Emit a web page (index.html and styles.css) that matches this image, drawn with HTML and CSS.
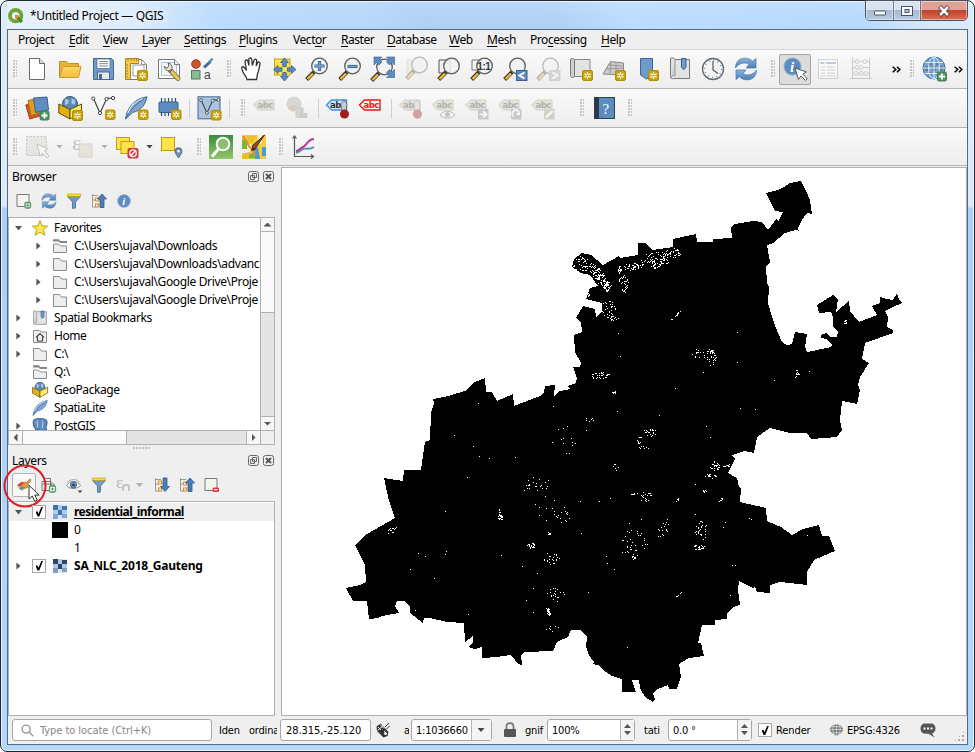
FILE: index.html
```
<!DOCTYPE html>
<html lang="en">
<head>
<meta charset="utf-8">
<title>*Untitled Project — QGIS</title>
<link rel="stylesheet" href="styles.css">
</head>
<body>
<svg class="gradients" width="0" height="0" aria-hidden="true">
<defs>
<linearGradient id="gBlue" x1="0" y1="0" x2="0" y2="1"><stop offset="0" stop-color="#8fb4da"/><stop offset="1" stop-color="#4c7eb5"/></linearGradient>
<linearGradient id="gYel" x1="0" y1="0" x2="0" y2="1"><stop offset="0" stop-color="#fbd766"/><stop offset="1" stop-color="#f2bd3c"/></linearGradient>
<linearGradient id="gGrn" x1="0" y1="0" x2="0" y2="1"><stop offset="0" stop-color="#3c8b3c"/><stop offset="1" stop-color="#92c76a"/></linearGradient>
</defs>
</svg>
<svg class="defs" aria-hidden="true">
<symbol id="gold" viewBox="0 0 11 11"><rect x=".5" y=".5" width="10" height="10" rx="1.5" fill="#c8a20a" stroke="#b38f00"/><path d="M5.5 2v7M2.4 3.7l6.2 3.6M8.6 3.7L2.4 7.3" stroke="#fff" stroke-width="1.3"/><circle cx="5.5" cy="5.5" r="1" fill="#c8a20a"/></symbol>
<symbol id="plus" viewBox="0 0 10 10"><rect x=".5" y=".5" width="9" height="9" rx="1.5" fill="#4f9461" stroke="#3f7d50"/><path d="M5 2v6M2 5h6" stroke="#fff" stroke-width="1.8"/></symbol>
<symbol id="mag" viewBox="0 0 24 24"><path d="M9 15l-7.300 7.500" stroke="#333" stroke-width="4"/><path d="M8 16.500l-5.500 5.500" stroke="#f4bd2e" stroke-width="2.400"/><circle cx="14.500" cy="9" r="7.800" fill="#eef1f3" fill-opacity=".85" stroke="#5b5b5b" stroke-width="1.300"/></symbol>
<symbol id="new" viewBox="0 0 24 24"><path d="M4.500 1.500h10l5 5v16h-15z" fill="#fff" stroke="#6a6a6a"/><path d="M14.500 1.500v5h5" fill="#ddd" stroke="#6a6a6a"/></symbol>
<symbol id="open" viewBox="0 0 24 24"><path d="M1.500 20V4.500h7l2 2h10V10" fill="#e9b13a" stroke="#bf8f22"/><path d="M1.500 20.500L5 9.500h18l-2.500 11z" fill="url(#gYel)" stroke="#cf9b28"/></symbol>
<symbol id="save" viewBox="0 0 24 24"><path d="M2.500 1.500h18l2 2v19h-20z" fill="#6e9bcb" stroke="#44698f"/><rect x="6" y="2" width="13" height="9.500" fill="#fff" stroke="#44698f" stroke-width=".7"/><path d="M8 4.500h9M8 6.700h9M8 9h9" stroke="#888"/><rect x="6.500" y="15" width="12" height="7.500" fill="#e8e8e8" stroke="#44698f"/><rect x="8" y="17" width="3" height="5" fill="#44698f"/></symbol>
<symbol id="layout" viewBox="0 0 24 24"><path d="M5.500 2.500h12l5 5v15h-17z" fill="#fff" stroke="#777"/><path d="M17.500 2.500v5h5M9 8h11v11H9z" fill="none" stroke="#999"/><path d="M1.500 1.500h13v5h-8v16h-5z" fill="#f3cb49" stroke="#a8811a"/><path d="M4 2v2M7 2v2M10 2v2M12.500 2v2M2 8h2M2 11h2M2 14h2M2 17h2M2 20h2" stroke="#a8811a"/><use href="#gold" x="13" y="13" width="11" height="11"/></symbol>
<symbol id="wrench" viewBox="0 0 24 24"><path d="M1.500 2.500h16l5 5v14h-21z" fill="#fff" stroke="#777"/><path d="M4.500 5.500h15v13h-15z" fill="#f4f8fc" stroke="#aac2dc"/><path d="M17.500 2.500v5h5" fill="#eee" stroke="#777"/><path d="M12 12l9 9.500" stroke="#8a7a45" stroke-width="5" stroke-linecap="round"/><path d="M15.500 15.500l5.500 6" stroke="#e7c85a" stroke-width="3.200" stroke-linecap="round"/><path d="M7 9.500c1.500 4 3.500 4.500 6 4l2-2c.5-3-1-5-4-5.500l1 3-2 2z" fill="#e3e3e3" stroke="#666"/></symbol>
<symbol id="style" viewBox="0 0 24 24"><circle cx="6" cy="7" r="4.300" fill="#d2562d" stroke="#9d3c1c"/><path d="M14 10.500l6.500-6" stroke="#44698f" stroke-width="3"/><path d="M19 5.500l3.500-4" stroke="#5b8bbd" stroke-width="2.400"/><rect x="1.500" y="13.500" width="8.500" height="8.500" fill="#8db894" stroke="#4d7f56"/><text x="14" y="22" class="ic-a">a</text></symbol>
<symbol id="hand" viewBox="0 0 24 24"><path d="M8 22.500c-.5-3-3-5-4-7.500C3 12.500 2.500 10.500 3 10c1.500-1 3 1 4.500 3.500L6 4.500c0-2 2.500-2 3 0l1 4-.2-6c.2-2 2.800-2 3 0l.5 6L15 3.500c.5-2 2.800-1.500 2.700.3L17.200 9l1.500-3.300c1-1.500 2.500-.7 2.300.8-.6 4-1 7-2.500 10.500l-1 5.500z" fill="#fff" stroke="#333" stroke-width="1.300"/></symbol>
<symbol id="pan" viewBox="0 0 24 24"><rect x="2.500" y="2" width="15.500" height="16" fill="#fde24b" stroke="#c8a20a"/><g fill="#5c8cbf" stroke="#36608d" stroke-width=".8"><path d="M12.500 1l4 4.500h-2.300v4h-3.400v-4H8.500z"/><path d="M12.500 24l4-4.500h-2.300v-4h-3.400v4H8.500z"/><path d="M1.500 12.500l4.500-4v2.300h4v3.400H6v2.300z"/><path d="M24 12.500l-4.500-4v2.300h-4v3.400h4v2.300z"/></g></symbol>
<symbol id="zin" viewBox="0 0 24 24"><use href="#mag"/><path d="M14.500 4v10M9.500 9h10" stroke="#36608d" stroke-width="3.200"/><path d="M14.500 4.700v8.600M10.200 9h8.600" stroke="#6e9bcb" stroke-width="1.800"/></symbol>
<symbol id="zout" viewBox="0 0 24 24"><use href="#mag"/><path d="M9.500 9.500h10" stroke="#36608d" stroke-width="3.200"/><path d="M10.200 9.500h8.600" stroke="#6e9bcb" stroke-width="1.800"/></symbol>
<symbol id="zfull" viewBox="0 0 24 24"><use href="#mag" x="-1" y="1" /><g fill="#5c8cbf" stroke="#36608d" stroke-width=".6"><path d="M3 0h8L8.500 2.500 11 5l-3 3-2.500-2.500L3 8z"/><path d="M23.500 0v8L21 5.500 18.500 8l-3-3L18 2.500 15.500 0z"/><path d="M23.500 20.500h-8L18 18l-2.500-2.500 3-3L21 15l2.500-2.500z"/></g></symbol>
<symbol id="zsel" viewBox="0 0 24 24"><path d="M3 3h13v13H3z" fill="#e5e0bd" stroke="#bbb"/><use href="#mag" x="1" y="-1"/></symbol>
<symbol id="zlay" viewBox="0 0 24 24"><path d="M2 3h11v13H2z" fill="#f2f2f2" stroke="#555"/><use href="#mag"/></symbol>
<symbol id="znat" viewBox="0 0 24 24"><path d="M2 3h9v10H2z" fill="#f2f2f2" stroke="#777"/><use href="#mag"/><text x="7.300" y="12.500" class="ic-one">1:1</text></symbol>
<symbol id="zlast" viewBox="0 0 24 24"><use href="#mag"/><rect x="13.500" y="13.500" width="10.500" height="10" fill="#5c8cbf" stroke="#36608d"/><path d="M21.500 15.500l-5 3 5 3" fill="none" stroke="#fff" stroke-width="2"/></symbol>
<symbol id="znext" viewBox="0 0 24 24"><use href="#mag"/><rect x="13.500" y="13.500" width="10.500" height="10" fill="#aaa" stroke="#999"/><path d="M16.500 15.500l5 3-5 3" fill="none" stroke="#fff" stroke-width="2"/></symbol>
<symbol id="mapv" viewBox="0 0 24 24"><path d="M3 2.500h18v17H5.500" fill="#e2e2e2" stroke="#888"/><path d="M1.500 2c3-1.500 4 0 4 1.500v16c-2 2-4 1-4-1z" fill="#cfcfcf" stroke="#777"/><use href="#gold" x="13" y="13" width="11" height="11"/></symbol>
<symbol id="map3" viewBox="0 0 24 24"><path d="M1 17L8.500 4.500l13 1.500v12z" fill="#ccc" stroke="#888"/><path d="M4 12l17-1M6.500 8l15 1M9 4.500L8 17M14 5v12" stroke="#999" fill="none"/><use href="#gold" x="13" y="13" width="11" height="11"/></symbol>
<symbol id="bmk" viewBox="0 0 24 24"><path d="M5.500 1.500h12V19l-6 3-6-4z" fill="#6e9bcb" stroke="#3a6798"/><use href="#gold" x="13" y="13" width="11" height="11"/></symbol>
<symbol id="book" viewBox="0 0 24 24"><path d="M2.500 1.500c2-1 4-.5 4.500 1h14.500v19h-16c-2 1-3-.5-3-2z" fill="#e3e3e3" stroke="#777"/><path d="M7 3v16c-2-1-4 0-4 2" fill="#cfcfcf" stroke="#999"/><path d="M13.500 1.500h4.500v9l-2.250 2-2.250-2z" fill="#6e9bcb" stroke="#36608d"/></symbol>
<symbol id="clock" viewBox="0 0 24 24"><circle cx="12" cy="12" r="10.500" fill="#f3f3f3" stroke="#666" stroke-width="1.300"/><circle cx="12" cy="12" r="8.500" fill="none" stroke="#5c8cbf" stroke-width="1.500" stroke-dasharray="1 3.450"/><path d="M12 4v9l5 3.500" fill="none" stroke="#555" stroke-width="1.200"/></symbol>
<symbol id="refresh" viewBox="0 0 24 24"><path d="M1.500 11C1.500 4 6 1.200 11 1.200c3.500 0 6 1.300 7.500 3L22 1.500V11H12l3-3.500C12 5 5 5.500 1.500 11z" fill="url(#gBlue)" stroke="#4079b5" stroke-width=".7"/><path d="M22.500 13c0 7-4.500 9.800-9.500 9.800-3.500 0-6-1.300-7.500-3L2 22.500V13h10l-3 3.500c3 2.500 10 2 13.500-3.500z" fill="url(#gBlue)" stroke="#4079b5" stroke-width=".7"/></symbol>
<symbol id="cursor" viewBox="0 0 14 18"><path d="M1 .8v13.700l3.300-3 2.500 5.300 2.500-1.200-2.500-5h4.300z" fill="#fff" stroke="#333" stroke-width="1"/></symbol>
<symbol id="info" viewBox="0 0 24 24"><circle cx="9.500" cy="9.500" r="8.700" fill="#5c8cbf" stroke="#a5bfda"/><text x="7" y="15" class="ic-i">i</text><path d="M12 11l3.500 11.500 2.500-3.500 4.500 4.500 1.800-1.800-4.500-4.500 3.500-2.300z" fill="#fff" stroke="#555"/></symbol>
<symbol id="table" viewBox="0 0 24 24"><rect x="2.500" y="2.500" width="19" height="19" fill="#fff" stroke="#999"/><path d="M4.500 6h4M10 6h10" stroke="#5c8cbf" stroke-width="2.200"/><path d="M5 10h4M11 10h8M5 13h4M11 13h8M5 16h4M11 16h8M5 19h4M11 19h8" stroke="#999"/></symbol>
<symbol id="abacus" viewBox="0 0 24 24"><path d="M3.500 1v20M20.500 1v20M3.500 4.500h17M3.500 10.500h17M3.500 16.500h17M1 21.500h22" fill="none" stroke="#888"/><g fill="#eee" stroke="#aa9090"><circle cx="8" cy="4.500" r="2"/><circle cx="16" cy="4.500" r="2"/><circle cx="8" cy="10.500" r="2"/><circle cx="12" cy="10.500" r="2"/><circle cx="7" cy="16.500" r="2"/><circle cx="12" cy="16.500" r="2"/><circle cx="17" cy="16.500" r="2"/></g></symbol>
<symbol id="globe" viewBox="0 0 24 24"><circle cx="11" cy="11" r="11" fill="#6fa3da" stroke="#3b6da0"/><path d="M5 4.500h4v4H5zM13 4.500h4v4h-4zM2 9h4v5H2zM9 9h4v5H9zM16 9h4v5h-4zM5 15h4v3H5zM13 15h3v3h-3z" fill="#6d6d6d" opacity=".75"/><path d="M11 0v22M0 11h22M2 5.500h18M2 16.500h18" stroke="#dfeefc" fill="none"/><ellipse cx="11" cy="11" rx="5.500" ry="11" fill="none" stroke="#dfeefc"/><use href="#plus" x="14" y="14.500" width="10" height="10"/></symbol>
<symbol id="dsm" viewBox="0 0 24 24"><path d="M.8 9l8-3 6 14-10 3z" fill="#d2562d" stroke="#a43f1b"/><path d="M3 4.500l9-2 6 14-12 3z" fill="#e39b22" stroke="#a87115"/><path d="M8.500 2l13.500-1 1.500 13-13 2.500z" fill="#5f8ec1" stroke="#36608d"/><use href="#plus" x="14.500" y="14.500" width="10" height="10"/></symbol>
<symbol id="box" viewBox="0 0 24 24"><circle cx="12" cy="8" r="7.500" fill="#5c86b4" stroke="#2e5379"/><path d="M7 2.500l4 2-1 3.500-3 1zM13.500 2l4 2.500-1 4-3-1z" fill="#a9c6e4"/><path d="M.8 8l11.200 5.500V23L.8 17z" fill="#e5b012" stroke="#5c4a10"/><path d="M12 13.500L23.500 8v8.500L12 23z" fill="#fdec6c" stroke="#5c4a10"/></symbol>
<symbol id="boxnew" viewBox="0 0 24 24"><use href="#box"/><use href="#gold" x="14" y="14" width="11" height="11"/></symbol>
<symbol id="vnode" viewBox="0 0 24 24"><path d="M2.500 2.500L9 17 15.500 3c2-2.500 4 1 6.500-1.500" fill="none" stroke="#444" stroke-width="1.200"/><g fill="#fff" stroke="#444"><circle cx="2.300" cy="2.500" r="1.600"/><circle cx="9" cy="17" r="1.600"/><circle cx="15.500" cy="3" r="1.600"/><circle cx="22" cy="2" r="1.600"/></g></symbol>
<symbol id="shp" viewBox="0 0 24 24"><use href="#vnode"/><use href="#gold" x="14" y="13.500" width="10.500" height="10.500"/></symbol>
<symbol id="feather" viewBox="0 0 24 24"><path d="M1.500 23C3 14 8 3 23 .8c-1.500 7-5 13.500-14.500 15.700z" fill="#7fa6cf" stroke="#3e6a97"/><path d="M1.500 23C6 14 13 7 20 3" fill="none" stroke="#3e6a97"/><path d="M4 17c2-6 7-12 15-14.500" fill="none" stroke="#d2e2f2" stroke-width="1.300"/></symbol>
<symbol id="splnew" viewBox="0 0 24 24"><use href="#feather"/><use href="#gold" x="14" y="13.500" width="10.500" height="10.500"/></symbol>
<symbol id="chip" viewBox="0 0 24 24"><path d="M4.500 2v18M8 2v18M11.500 2v18M15 2v18M18.500 2v18" stroke="#27517e" stroke-width="1.200"/><rect x="2" y="6" width="19" height="10.500" rx="1" fill="#5c8cbf" stroke="#36608d"/><use href="#gold" x="14" y="13.500" width="10.500" height="10.500"/></symbol>
<symbol id="virt" viewBox="0 0 24 24"><rect x="1" y=".8" width="22" height="22" fill="#a9c3de" stroke="#44698f"/><g transform="translate(2 2)scale(.88)"><use href="#vnode" width="24" height="24"/></g><use href="#gold" x="14" y="14" width="10.500" height="10.500"/></symbol>
<symbol id="tag" viewBox="0 0 24 24"><path d="M.5 9l5-5H21v10H5.500z" fill="#c9c8a9" stroke="#999976"/><text x="4.500" y="12" class="ic-abc">abc</text></symbol>
<symbol id="pie" viewBox="0 0 24 24"><circle cx="8" cy="8" r="7" fill="#a7a7a7" stroke="#999"/><path d="M8 8L2 12a7 7 0 0010 2z" fill="#a69070"/><path d="M9.500 14h4v8h-4z" fill="#b8a0a0"/><path d="M13.500 11.500h4v10.500h-4z" fill="#7f9a7f"/><path d="M17.500 17h4v5h-4z" fill="#a09080"/></symbol>
<symbol id="pin" viewBox="0 0 24 24"><path d="M15 8l3-4 3 4-1 8h-4z" fill="#ccc" stroke="#555" stroke-width=".7"/><circle cx="18.500" cy="18" r="4.500" fill="#a61b1b"/></symbol>
<symbol id="tagpin" viewBox="0 0 24 24"><path d="M.5 9l5-5h15v10h-15z" fill="#cfe4fb" stroke="#3f8fe8" stroke-width="1.300"/><text x="4" y="12" class="ic-abc dark">ab</text><use href="#pin"/></symbol>
<symbol id="tagred" viewBox="0 0 24 24"><path d="M.5 9l5-5h15.500v10H5.500z" fill="#fff" stroke="#f21212" stroke-width="1.400"/><text x="4.500" y="12" class="ic-abc red">abc</text></symbol>
<symbol id="tpin" viewBox="0 0 24 24"><path d="M.5 9l5-5H21v10H5.500z" fill="#c9c8a9" stroke="#999976"/><text x="4" y="12" class="ic-abc">ab</text><use href="#pin"/></symbol>
<symbol id="teye" viewBox="0 0 24 24"><use href="#tag"/><path d="M8 19c4-5 11-5 15 0-4 4-11 4-15 0z" fill="#fff" stroke="#555"/><circle cx="15.500" cy="18.500" r="2.500" fill="#777"/></symbol>
<symbol id="tmove" viewBox="0 0 24 24"><use href="#tag"/><rect x="13" y="13" width="10.500" height="10.500" rx="1" fill="#888"/><path d="M14.500 18.300h6M18 15l3.500 3.300L18 21.500" fill="none" stroke="#fff" stroke-width="1.800"/></symbol>
<symbol id="trot" viewBox="0 0 24 24"><use href="#tag"/><rect x="13" y="13" width="10.500" height="10.500" rx="1" fill="#888"/><path d="M16 20.500a3.400 3.400 0 115-2l-3-.5" fill="none" stroke="#fff" stroke-width="1.600"/></symbol>
<symbol id="tedit" viewBox="0 0 24 24"><use href="#tag"/><rect x="13" y="13" width="10.500" height="10.500" rx="1" fill="#a5a084"/><path d="M15 21.500l6.500-6.500" stroke="#fff" stroke-width="2.400"/></symbol>
<symbol id="help" viewBox="0 0 24 24"><rect x="1.500" y="1.500" width="20" height="21" fill="#5c8cbf" stroke="#2b3f55"/><rect x="1.500" y="1.500" width="4.500" height="21" fill="#2b3846"/><text x="9.500" y="17.500" class="ic-q">?</text></symbol>
<symbol id="select" viewBox="0 0 24 24"><rect x="1.500" y="1.500" width="20" height="19" fill="#d0d0c4" stroke="#777" stroke-dasharray="2 1.500"/><path d="M12 9l3 12 2.500-3 4.500 5 2-2-4.500-5 3.500-2z" fill="#fff" stroke="#777"/></symbol>
<symbol id="selexp" viewBox="0 0 24 24"><rect x="9" y="9" width="13" height="13" fill="#d4cfb3" stroke="#aaa58a"/><text x="2" y="15" class="ic-eps">ε</text></symbol>
<symbol id="desel" viewBox="0 0 24 24"><rect x="1.500" y="2.500" width="13" height="12" fill="#fde24b" stroke="#c19c08"/><rect x="6" y="6.500" width="13" height="12" fill="#fde24b" stroke="#c19c08"/><rect x="12.500" y="13" width="11" height="10.500" rx="2" fill="#d8363b"/><circle cx="18" cy="18.200" r="3.300" fill="none" stroke="#fff" stroke-width="1.300"/><path d="M15.800 20.500l4.500-4.500" stroke="#fff" stroke-width="1.300"/></symbol>
<symbol id="selloc" viewBox="0 0 24 24"><rect x="1.500" y="2.500" width="13" height="13" fill="#fde24b" stroke="#c19c08"/><path d="M18.500 23c-1.500-3-3.500-4.500-3.500-6.800a3.500 3.500 0 017 0c0 2.300-2 3.800-3.500 6.800z" fill="#6f90b4" stroke="#4c6c90"/><circle cx="18.500" cy="16.200" r="1.200" fill="#fff"/></symbol>
<symbol id="qosm" viewBox="0 0 24 24"><rect width="24" height="24" fill="url(#gGrn)"/><circle cx="14" cy="9" r="6.300" fill="#a8d08d" fill-opacity=".6" stroke="#fff" stroke-width="2"/><path d="M9.500 14L3 21.500" stroke="#fff" stroke-width="3"/></symbol>
<symbol id="osm" viewBox="0 0 24 24"><rect width="24" height="24" fill="#f3ce3c"/><path d="M0 9h9l2 4-3 5H0zM16 0h4v8l-5 2z" fill="#f4f0e0"/><path d="M5 0l9 1-3 6-6 2zM0 20l9-4 3 8H0z" fill="#e9c02c"/><path d="M12 9l4 4 2 11h-5zM20 12h4v9h-4z" fill="#4a9ad6"/><path d="M0 4l5 3v7H0zM7 20l5-3 1 6H7z" fill="#79b63b"/><path d="M1 1l6 10 7 9" fill="none" stroke="#e68a19" stroke-width="1.800"/><path d="M22.500 0L13 14l-3 .5.500-4z" fill="#8d4d1f" stroke="#4b2a10"/><path d="M8.500 16l3-3 2 2z" fill="#222"/></symbol>
<symbol id="plot" viewBox="0 0 24 24"><path d="M3.500 1v20.500H22M1.500 3.500l2-2.500 2 2.500M20 19.500l2.500 2-2.500 2" fill="none" stroke="#555" stroke-width="1.200"/><path d="M5 18c4-1 5-3 7-4s7 1 11-2" fill="none" stroke="#4d93b0" stroke-width="1.800"/><path d="M5 16c3 0 4-3 7-4s5-8 11-8" fill="none" stroke="#b7359c" stroke-width="2"/></symbol>
<symbol id="addl" viewBox="0 0 16 16"><path d="M1 1.500h12v12H1z" fill="#f5f5f0" stroke="#777"/><rect x="9" y="9.500" width="5.500" height="5.500" rx="1.500" fill="#fff" stroke="#4f9461" stroke-width="1.300"/><path d="M11.750 10.500v3.500M10 12.250h3.500" stroke="#4f9461"/></symbol>
<symbol id="filter" viewBox="0 0 16 16"><path d="M1.500 3.500h13l-5 5.500v6l-3 .5V9z" fill="#6e9bcb" stroke="#44698f" stroke-width=".8"/><path d="M1.500 1h13v2.500h-13z" fill="#f6dc3d" stroke="#c19c08" stroke-width=".6"/></symbol>
<symbol id="up" viewBox="0 0 16 16"><path d="M1.500 1v13h4M1.500 7h3M1 2.500h6" fill="none" stroke="#999"/><rect x="4.500" y="5" width="3" height="3" fill="none" stroke="#e38e1b"/><rect x="4.500" y="11" width="3" height="3" fill="none" stroke="#e38e1b"/><path d="M11 1l4.500 5H13v8.500H9V6H6.500z" fill="#4c7eb5" stroke="#2b5c92" stroke-width=".8"/></symbol>
<symbol id="down" viewBox="0 0 16 16"><path d="M1.500 1v13h4M1.500 7h3M1 2.500h6" fill="none" stroke="#999"/><rect x="4.500" y="4" width="3" height="3" fill="none" stroke="#e38e1b"/><rect x="4.500" y="11" width="3" height="3" fill="none" stroke="#e38e1b"/><path d="M11 14.500L6.500 9.500H9V1h4v8.500h2.500z" fill="#4c7eb5" stroke="#2b5c92" stroke-width=".8"/></symbol>
<symbol id="infos" viewBox="0 0 16 16"><circle cx="8" cy="8" r="6.500" fill="#5c8cbf" stroke="#a5bfda"/><text x="6.200" y="12" class="ic-is">i</text></symbol>
<symbol id="star" viewBox="0 0 16 16"><path d="M8 .6l2.100 5.200 5.500.3-4.200 3.600 1.400 5.500L8 12.200l-4.800 3 1.400-5.500L.4 6.100l5.500-.3z" fill="#fce94f" stroke="#b8960b" stroke-width=".9"/></symbol>
<symbol id="fold" viewBox="0 0 16 16"><path d="M1.500 2.500h6l2 2.500h5v9.500h-13z" fill="#ededed" stroke="#8b8b8b"/></symbol>
<symbol id="foldl" viewBox="0 0 16 16"><path d="M1 1.200h6l1 1.800h7v2H8L6.500 3.500H1z" fill="#858585"/><path d="M1.500 6h5l2 2h6v6.500h-13z" fill="#ededed" stroke="#8b8b8b"/></symbol>
<symbol id="homef" viewBox="0 0 16 16"><path d="M1.500 2.500h6l2 1.500h5v10.500h-13z" fill="#ededed" stroke="#8b8b8b"/><path d="M4 9.500l4-4 4 4M5.500 9v4h5V9" fill="none" stroke="#444" stroke-width="1.100"/></symbol>
<symbol id="pg" viewBox="0 0 16 16"><path d="M1.500 2c3-2 9-2 13 0 1 2 .5 6-1 8l1.500 1-3 1.500L11 15H7.500L7 11l-3 1C1.500 9 .5 5 1.500 2z" fill="#5c8cbf" stroke="#36608d"/><path d="M5.500 2.500c-1 2.500.5 4 0 7M10.500 2.500c1 2.500-.5 5 0 7.500" fill="none" stroke="#dbe8f5" stroke-width=".8"/></symbol>
<symbol id="raster" viewBox="0 0 14 14"><path d="M0 0h14v14H0z" fill="#dde7f2"/><path d="M5 0h4v5H5zM0 5h5v4H0zM9 5h5v4H9z" fill="#b4cbe6"/><path d="M0 9h5v5H0zM9 9h5v4H9z" fill="var(--mid)"/><path d="M0 0h5v5H0zM5 5h4v5H5zM9 1h5v4H9z" fill="var(--dk)"/></symbol>
<symbol id="brush" viewBox="0 0 16 16"><path d="M0 10l7-5 6 5-7 5z" fill="#efd22b"/><path d="M0 8l6-4 2 2-5 4z" fill="#e53b3b"/><path d="M5 14l-3-2 3-3 4 2z" fill="#4c8fe0"/><path d="M5 8.500L8 4.500l3 1 3.500-4.500 1.500 1-3 5-1 3.500c-2 2-5 1-7-2z" fill="#e59a45" stroke="#9d5f1d" stroke-width=".7"/></symbol>
<symbol id="addg" viewBox="0 0 16 16"><path d="M1 4.500h9v9H1zM4.500 1.500h5v12M2 7h11v6" fill="none" stroke="#777"/><rect x="8.500" y="9" width="6" height="6" rx="1.500" fill="#fff" stroke="#4f9461" stroke-width="1.300"/><path d="M11.500 10.500v3M10 12h3" stroke="#4f9461"/></symbol>
<symbol id="eye" viewBox="0 0 16 16"><path d="M.5 8.500C4 3 11 3 14.500 8.500 11 12.500 4 12.500.5 8.500z" fill="#fff" stroke="#888"/><path d="M1 5.500c4-4 10-4 13 0" fill="none" stroke="#aaa"/><circle cx="7.500" cy="8" r="3" fill="#6e9bcb" stroke="#36608d"/><circle cx="7.500" cy="8" r="1.200" fill="#223"/><path d="M11.500 13.500h5l-2.500 2.500z" fill="#444"/></symbol>
<symbol id="rem" viewBox="0 0 16 16"><path d="M1 1.500h12v12H1z" fill="#f5f5f0" stroke="#777"/><rect x="8.500" y="10.500" width="6.500" height="4.500" rx="1.500" fill="#e0383e"/><path d="M10 12.700h3.500" stroke="#fff" stroke-width="1.200"/></symbol>
<symbol id="float" viewBox="0 0 12 12"><rect x=".5" y=".5" width="10" height="10" rx="2" fill="none" stroke="#666"/><path d="M4.500 2.500h4v4h-4zM2.500 4.500h4v4h-4z" fill="#efefef" stroke="#666"/></symbol>
<symbol id="close" viewBox="0 0 12 12"><rect x=".5" y=".5" width="10" height="10" rx="2" fill="none" stroke="#666"/><path d="M3 3l5 5M8 3L3 8" stroke="#555" stroke-width="2"/></symbol>
</svg>

<div class="window">
  <header class="titlebar">
    <svg class="logo" viewBox="0 0 16 16"><circle cx="7.700" cy="7.700" r="5.700" fill="none" stroke="#6da536" stroke-width="3.800"/><path d="M8.500 8.500l5.500 5.500" stroke="#4f8a25" stroke-width="3.200"/><path d="M7 7h3.500v2L9 10.500H7z" fill="#ef8a34"/></svg>
    <span class="caption">*Untitled Project — QGIS</span>
    <div class="winbtns">
      <i class="wb min"><svg viewBox="0 0 14 10"><rect x="1.500" y="5" width="11" height="4" rx=".5" fill="#fff" stroke="#46566b"/></svg></i>
      <i class="wb max"><svg viewBox="0 0 14 10"><rect x="1.500" y=".5" width="11" height="9" fill="#fff" stroke="#46566b"/><rect x="5" y="3.500" width="4" height="3" fill="#b7c9de" stroke="#46566b"/></svg></i>
      <i class="wb cls"><svg viewBox="0 0 14 10"><path d="M2.500.5l9 9M11.500.5l-9 9" stroke="#53393b" stroke-width="4.300"/><path d="M3 1l8 8M11 1L3 9" stroke="#fff" stroke-width="2.500"/></svg></i>
    </div>
  </header>
  <div class="client">
    <nav class="menubar">
      <span>Pro<u>j</u>ect</span><span><u>E</u>dit</span><span><u>V</u>iew</span><span><u>L</u>ayer</span><span><u>S</u>ettings</span><span><u>P</u>lugins</span><span>Vect<u>o</u>r</span><span><u>R</u>aster</span><span><u>D</u>atabase</span><span><u>W</u>eb</span><span><u>M</u>esh</span><span>Pro<u>c</u>essing</span><span><u>H</u>elp</span>
    </nav>
    <div class="toolbar">
      <i class="grip first"></i>
      <svg class="ic"><use href="#new"/></svg><svg class="ic"><use href="#open"/></svg><svg class="ic"><use href="#save"/></svg><svg class="ic"><use href="#layout"/></svg><svg class="ic"><use href="#wrench"/></svg><svg class="ic"><use href="#style"/></svg>
      <i class="grip"></i>
      <svg class="ic"><use href="#hand"/></svg><svg class="ic"><use href="#pan"/></svg><svg class="ic"><use href="#zin"/></svg><svg class="ic"><use href="#zout"/></svg><svg class="ic"><use href="#zfull"/></svg><svg class="ic off"><use href="#zsel"/></svg><svg class="ic"><use href="#zlay"/></svg><svg class="ic"><use href="#znat"/></svg><svg class="ic"><use href="#zlast"/></svg><svg class="ic off"><use href="#znext"/></svg><svg class="ic"><use href="#mapv"/></svg><svg class="ic"><use href="#map3"/></svg><svg class="ic"><use href="#bmk"/></svg><svg class="ic"><use href="#book"/></svg><svg class="ic"><use href="#clock"/></svg><svg class="ic"><use href="#refresh"/></svg>
      <i class="grip"></i>
      <span class="pressed"><svg class="ic"><use href="#info"/></svg></span><svg class="ic off"><use href="#table"/></svg><svg class="ic off"><use href="#abacus"/></svg>
      <svg class="more wide" viewBox="0 0 9 7"><path d="M.7.700l3 2.800-3 2.800M4.900.700l3 2.800-3 2.800" /></svg>
      <i class="grip tight"></i>
      <svg class="ic"><use href="#globe"/></svg>
      <svg class="more" viewBox="0 0 9 7"><path d="M.7.700l3 2.800-3 2.800M4.900.700l3 2.800-3 2.800" /></svg>
    </div>
    <div class="toolbar">
      <i class="grip first"></i>
      <svg class="ic"><use href="#dsm"/></svg><svg class="ic"><use href="#boxnew"/></svg><svg class="ic"><use href="#shp"/></svg><svg class="ic"><use href="#splnew"/></svg><svg class="ic"><use href="#chip"/></svg>
      <i class="sep"></i><svg class="ic"><use href="#virt"/></svg><i class="sep"></i>
      <i class="grip near"></i>
      <svg class="ic off"><use href="#tag"/></svg><svg class="ic off"><use href="#pie"/></svg><i class="sep"></i>
      <svg class="ic"><use href="#tagpin"/></svg><svg class="ic"><use href="#tagred"/></svg><i class="sep"></i>
      <svg class="ic off"><use href="#tpin"/></svg><svg class="ic off"><use href="#teye"/></svg><svg class="ic off"><use href="#tmove"/></svg><svg class="ic off"><use href="#trot"/></svg><svg class="ic off"><use href="#tedit"/></svg>
      <i class="grip far"></i><svg class="ic"><use href="#help"/></svg><i class="grip end"></i>
    </div>
    <div class="toolbar last">
      <i class="grip first"></i>
      <svg class="ic off"><use href="#select"/></svg><i class="drop off"></i><svg class="ic off"><use href="#selexp"/></svg><i class="drop off"></i><svg class="ic"><use href="#desel"/></svg><i class="drop"></i><svg class="ic"><use href="#selloc"/></svg>
      <i class="grip"></i><svg class="ic"><use href="#qosm"/></svg><svg class="ic"><use href="#osm"/></svg>
      <i class="grip"></i><svg class="ic"><use href="#plot"/></svg>
    </div>

    <main class="work">
      <aside class="dock">
        <div class="dockhead"><span>Browser</span><svg><use href="#float"/></svg><svg><use href="#close"/></svg></div>
        <div class="docktools"><svg><use href="#addl"/></svg><svg><use href="#refresh"/></svg><svg><use href="#filter"/></svg><svg><use href="#up"/></svg><svg><use href="#infos"/></svg></div>
        <div class="browser">
          <ul class="tree">
            <li><i class="tw open"></i><svg><use href="#star"/></svg><span>Favorites</span></li>
            <li class="sub"><i class="tw"></i><svg><use href="#foldl"/></svg><span>C:\Users\ujaval\Downloads</span></li>
            <li class="sub"><i class="tw"></i><svg><use href="#fold"/></svg><span>C:\Users\ujaval\Downloads\advanc</span></li>
            <li class="sub"><i class="tw"></i><svg><use href="#fold"/></svg><span>C:\Users\ujaval\Google Drive\Proje</span></li>
            <li class="sub"><i class="tw"></i><svg><use href="#fold"/></svg><span>C:\Users\ujaval\Google Drive\Proje</span></li>
            <li><i class="tw"></i><svg><use href="#book"/></svg><span>Spatial Bookmarks</span></li>
            <li><i class="tw"></i><svg><use href="#homef"/></svg><span>Home</span></li>
            <li><i class="tw"></i><svg><use href="#fold"/></svg><span>C:\</span></li>
            <li><i class="tw none"></i><svg><use href="#foldl"/></svg><span>Q:\</span></li>
            <li><i class="tw none"></i><svg><use href="#box"/></svg><span>GeoPackage</span></li>
            <li><i class="tw none"></i><svg><use href="#feather"/></svg><span>SpatiaLite</span></li>
            <li><i class="tw"></i><svg><use href="#pg"/></svg><span>PostGIS</span></li>
          </ul>
          <div class="vbar"><i class="sb u"></i><i class="thumb"></i><i class="sb d"></i></div>
          <div class="hbar"><i class="sb l"></i><i class="thumb"></i><i class="sb r"></i></div>
          <div class="corner"></div>
        </div>
        <div class="splitter"><i></i></div>
        <div class="dockhead"><span>Layers</span><svg><use href="#float"/></svg><svg><use href="#close"/></svg></div>
        <div class="docktools layers">
          <span class="stylebtn"><svg><use href="#brush"/></svg></span><svg><use href="#addg"/></svg><svg><use href="#eye"/></svg><svg><use href="#filter"/></svg><svg class="off eps" viewBox="0 0 16 16"><text x="0" y="11" class="ic-eps2">ε</text><path d="M7 14V9.500c0-2 6-2 6 0V14" fill="none" stroke="#777" stroke-width="1.800"/></svg><i class="drop off"></i><svg><use href="#down"/></svg><svg><use href="#up"/></svg><svg><use href="#rem"/></svg>
          <svg class="ring" viewBox="0 0 44 44"><circle cx="22" cy="22" r="20.500"/></svg>
          <svg class="pointer"><use href="#cursor"/></svg>
        </div>
        <ul class="layerlist">
          <li class="hl"><i class="tw open"></i><b class="chk"></b><svg class="ras lt"><use href="#raster"/></svg><span class="bold ul">residential_informal</span></li>
          <li class="leg"><i class="sw"></i><span>0</span></li>
          <li class="leg"><i class="sw w"></i><span>1</span></li>
          <li><i class="tw"></i><b class="chk"></b><svg class="ras"><use href="#raster"/></svg><span class="bold caps">SA_NLC_2018_Gauteng</span></li>
        </ul>
      </aside>
      <section class="canvas">
        <svg class="map" viewBox="282 168 684 547" shape-rendering="crispEdges">
          <path d="M766 193L778 190 784 187 790 183 801 181 806 191 810 200 812 214 807 213 802 220 798 228 799 231 796 230 785 233 773 243 767 245 770 262 766 267 767 283 769 287 768 303 773 320 778 333 782 342 787 345 792 344 795 332 807 334 805 347 807 352 817 350 831 347 832 345 827 339 821 338 821 335 826 333 830 337 837 337 838 332 833 327 833 317 831 312 819 313 817 305 833 295 838 299 836 312 849 301 850 311 859 322 877 315 872 306 880 303 880 297 887 299 893 300 897 293 899 299 902 303 893 307 885 311 888 317 887 327 893 330 893 333 865 343 862 359 869 363 860 377 858 385 860 390 857 404 842 401 840 420 842 430 837 437 811 439 807 433 790 433 770 428 757 437 754 453 744 451 732 455 735 459 728 473 737 478 739 487 741 488 740 502 766 508 767 521 781 527 792 535 803 529 819 525 822 536 829 536 835 551 814 560 807 572 807 585 780 582 770 585 770 593 757 592 755 586 753 588 739 581 738 590 740 605 733 607 727 613 727 619 715 620 715 625 702 625 698 643 701 643 704 656 689 658 679 664 681 677 677 689 669 689 668 685 658 689 653 693 655 699 653 702 645 697 640 688 639 680 632 680 636 692 622 692 622 679 612 676 603 670 598 665 592 664 594 662 589 655 586 647 587 637 581 630 571 630 568 637 557 642 553 651 525 652 521 655 522 665 518 664 513 657 510 655 497 657 482 658 482 647 475 649 468 647 473 643 473 636 465 642 464 623 447 622 430 618 424 618 423 623 410 613 410 607 405 601 397 601 395 606 399 613 382 616 378 618 369 619 367 601 353 601 346 588 360 585 366 582 365 565 355 545 367 534 395 518 389 501 384 478 403 481 404 470 421 470 425 442 430 440 431 413 434 403 433 399 448 396 465 391 475 382 485 378 486 392 492 392 497 401 513 394 514 406 540 396 544 393 545 386 555 385 554 396 560 391 570 389 567 386 576 383 577 378 573 367 580 367 581 363 575 352 574 335 582 332 581 322 576 318 583 306 595 309 596 317 602 312 602 303 586 299 590 288 598 286 590 275 581 273 572 267 574 259 582 253 591 255 603 265 619 256 620 258 638 255 638 243 646 243 652 250 673 247 673 239 696 234 697 242 713 242 713 239 732 238 731 227 735 224 753 221 762 222 768 230 777 218 778 222 783 212 775 211z"/>
          <path class="holes" id="settlements"/>
        </svg>
      </section>
    </main>

    <footer class="status">
      <div class="locate"><svg viewBox="0 0 14 14"><circle cx="5.500" cy="5.500" r="4.300"/><path d="M8.700 8.700l4.500 4.500"/></svg><span>Type to locate (Ctrl+K)</span></div>
      <span class="t iden">Iden</span><span class="t coordl">ordina</span>
      <div class="field coord"><span>28.315,-25.120</span></div>
      <svg class="mouse" viewBox="0 0 16 16"><path d="M1.500 4.500l4-3 8 8.500-1 4-4 1.500L2 9z" fill="#333"/><path d="M3 5l3 3M5 2.500l4 4M9 9l3 3M2.500 8.500l6-5" stroke="#eee"/><circle cx="10.500" cy="11.500" r="1.500" fill="#eee"/><path d="M10 5l4-4M11.500 7l3-3" stroke="#333"/></svg>
      <span class="t scalel">a</span>
      <div class="field scale"><span>1:1036660</span><b><i class="drop"></i></b></div>
      <svg class="lock" viewBox="0 0 12 16"><path d="M2.500 7V4.500c0-4.500 7-4.500 7 0V7" fill="none" stroke="#777" stroke-width="1.700"/><rect y="7" width="12" height="8" rx="1" fill="#555"/></svg>
      <span class="t magl">gnif</span>
      <div class="field mag"><span>100%</span><b class="spin"><i></i><i></i></b></div>
      <span class="t rotl">tati</span>
      <div class="field rot"><span>0.0 °</span><b class="spin"><i></i><i></i></b></div>
      <b class="chk"></b><span class="t render">Render</span>
      <svg class="crs" viewBox="0 0 16 14"><path d="M.5 6.500L3 2.500 8 .5l5 2 2.500 4-3 4L8 13.500l-4.500-3z" fill="#777"/><path d="M0 6.500h16M2 3.500h12M3 10h10M8 0v14M5.500 1c-2 4-2 8 1 12M10.500 1c2 4 2 8-1 12" fill="none" stroke="#ddd" stroke-width=".8"/></svg>
      <span class="t epsg">EPSG:4326</span>
      <svg class="msg" viewBox="0 0 16 15"><path d="M5 .5h6c3 0 4.500 2 4.500 5 0 2.500-1.500 4.500-3.500 5l2.500 4-6-3.800H5C2 10.700.5 8.500.5 5.500S2 .5 5 .5z" fill="#555"/><path d="M3.500 5.500h2M7 5.500h2M10.500 5.500h2" stroke="#fff" stroke-width="1.800"/></svg>
      <i class="sizegrip"></i>
    </footer>
  </div>
</div>
<script src="map.js"></script>
</body>
</html>
```
FILE: styles.css
```
* { box-sizing: border-box; }
html, body { margin: 0; height: 100%; overflow: hidden; background: #fff; }
body { font: 12px/18px "Noto Sans", "Open Sans", sans-serif; letter-spacing: -0.45px; color: #000; }
ul { list-style: none; margin: 0; padding: 0; }
svg { display: block; flex: none; overflow: visible; }
symbol { overflow: visible; }
i, b { font-style: normal; display: block; flex: none; }
.gradients { position: absolute; }
.defs { display: none; }
span { white-space: nowrap; }

.window { width: 975px; height: 752px; display: flex; flex-direction: column; padding: 0 6px 6px; border: 1px solid #1f2630; border-radius: 8px 8px 7px 7px; background: linear-gradient(#dcebfa 0, #d9e9f8 205px, #a9cffa 208px, #b4d8fd 100%); box-shadow: inset 0 0 0 1px #e8f6ff; }
.titlebar { height: 27px; margin-top: 1px; display: flex; align-items: center; border-radius: 6px 6px 0 0; background: linear-gradient(#ffffff20, #ffffff00), linear-gradient(60deg, #e6f1fb 0, #dcecfb 13%, #b9dbfc 22%, #b5d6f8 38%, #aed0f4 43%, #b0d1f4 57%, #bbdcfd 64%, #b6d9fc 88%, #d9e9f8 95%); }
.logo { width: 16px; height: 16px; margin-left: 1px; }
.caption { margin-left: 6px; flex: 1; letter-spacing: -0.33px; text-shadow: 0 0 8px #fff, 0 0 8px #fff; }
.winbtns { display: flex; align-self: flex-start; margin-top: -2px; height: 21px; border: 1px solid #465469; border-radius: 0 0 5px 5px; overflow: hidden; }
.wb { display: flex; align-items: center; justify-content: center; border-right: 1px solid #65758a; background: linear-gradient(#d9e3ef 0 45%, #a9bad0 50%, #b9cbe0); box-shadow: inset 0 0 0 1px #ffffff70; }
.wb svg { width: 14px; height: 10px; }
.wb.min { width: 28px; }
.wb.max { width: 27px; }
.wb.cls { width: 46px; border: 0; background: linear-gradient(#e2a293 0 45%, #c4422b 50%, #d87052); }

.client { flex: 1; min-height: 0; display: flex; flex-direction: column; border: 1px solid #566b80; background: #efefef; }
.menubar { height: 20px; padding-left: 10px; display: grid; grid-template-columns: 51px 34px 39px 42px 55px 54px 48px 46px 62px 38px 43px 71px auto; line-height: 20px; border-bottom: 1px solid #d6d6d6; }
u { text-decoration: underline; text-underline-offset: 2px; }

.toolbar { height: 39px; display: flex; align-items: center; border-bottom: 1px solid #b4b4b4; background: linear-gradient(#fafafa, #ededed); }
.toolbar.last { height: 38px; }
.ic { width: 24px; height: 24px; margin: 0 4.500px; }
.off { opacity: .38; }
.grip { width: 4px; height: 18px; margin: 0 4px 0 8px; background: radial-gradient(circle at 1px 1px, #c4c4c4 0.8px, transparent 1px) 0 0 / 3px 3px; }
.grip.first { margin: 0 3.500px 0 5px; }
.grip.tight { margin: 0 5px 0 9px; }
.grip.near { margin: 0 4px 0 8px; }
.grip.far { margin: 0 4.500px 0 20px; }
.grip.end { margin: 0 0 0 7px; }
.sep { width: 1px; height: 19px; margin: 0 3px; background: #cfcfcf; }
.pressed { width: 32px; height: 31px; display: flex; align-items: center; margin-right: 1px; border: 1px solid #a4a4a4; border-radius: 2px; background: #dcdcdc; }
.pressed .ic { margin: 0 3px; }
.more { width: 9px; height: 7px; fill: none; stroke: #000; stroke-width: 1.500; margin-left: 2px; }
.more.wide { margin-left: 14px; }
.drop { width: 7px; height: 4px; margin: 0 2.500px; background: #444; clip-path: polygon(0 0, 100% 0, 50% 100%); }

.ic-a { font: 12px "Liberation Sans", sans-serif; fill: #444; }
.ic-one { font: bold 10px "Liberation Sans", sans-serif; fill: #333; }
.ic-i { font: italic bold 15px "Liberation Serif", serif; fill: #fff; }
.ic-is { font: italic bold 11px "Liberation Serif", serif; fill: #fff; }
.ic-abc { font: bold 8.500px "DejaVu Sans", sans-serif; letter-spacing: -.5px; fill: #444; }
.ic-abc.dark { fill: #333; }
.ic-abc.red { fill: #f21212; }
.ic-q { font: 15px "Liberation Serif", serif; fill: #fff; }
.ic-eps { font: 22px "Liberation Serif", serif; fill: #777; }
.ic-eps2 { font: 17px "Liberation Serif", serif; fill: #666; }

.work { height: 550px; display: flex; }
.dock { width: 267px; display: flex; flex-direction: column; }
.dockhead { height: 22px; padding: 0 0 0 4px; display: flex; align-items: center; gap: 3px; }
.dockhead span { flex: 1; letter-spacing: -0.3px; }
.dockhead svg { width: 12px; height: 12px; }
.docktools { height: 29px; padding: 0 0 3px 8px; display: flex; align-items: center; gap: 9px; }
.docktools > svg { width: 16px; height: 16px; }

.browser { height: 228px; display: grid; grid-template: 212px 14px / 251px 14px; border: 1px solid #b0b0b0; background: #fff; }
.tree { overflow: hidden; }
.tree li, .layerlist li { height: 18px; display: flex; align-items: center; }
.tree li { padding-left: 6px; }
.tree li:first-child { margin-top: 1px; }
.tree li.sub { padding-left: 26px; }
.tree svg { width: 16px; height: 16px; margin-right: 6px; }
.tree li span { letter-spacing: -0.42px; }
.tree li.sub span { letter-spacing: -0.36px; }
.tw { width: 7px; height: 7px; margin-right: 10px; background: #555; clip-path: polygon(20% 0, 80% 50%, 20% 100%); }
.tw.open { clip-path: polygon(0 20%, 100% 20%, 50% 85%); }
.tw.none { background: none; }
.vbar { display: flex; flex-direction: column; border-left: 1px solid #b0b0b0; background: #e4e4e4; }
.hbar { display: flex; border-top: 1px solid #b0b0b0; background: #e4e4e4; }
.corner { border: solid #b0b0b0; border-width: 1px 0 0 1px; background: #efefef; }
.sb { position: relative; background: #f7f7f7; }
.sb::after { content: ""; position: absolute; left: 50%; top: 50%; width: 8px; height: 4px; margin: -2px 0 0 -4px; background: #555; }
.sb.u, .sb.d { height: 14px; }
.sb.u { border-bottom: 1px solid #b0b0b0; }
.sb.d { border-top: 1px solid #b0b0b0; margin-top: auto; }
.sb.l, .sb.r { width: 14px; }
.sb.l { border-right: 1px solid #b0b0b0; }
.sb.r { border-left: 1px solid #b0b0b0; margin-left: auto; }
.sb.u::after { clip-path: polygon(50% 0, 100% 100%, 0 100%); }
.sb.d::after { clip-path: polygon(0 0, 100% 0, 50% 100%); }
.sb.l::after, .sb.r::after { width: 4px; height: 8px; margin: -4px 0 0 -2px; }
.sb.l::after { clip-path: polygon(0 50%, 100% 0, 100% 100%); }
.sb.r::after { clip-path: polygon(0 0, 100% 50%, 0 100%); }
.vbar .thumb { height: 81px; background: #fafafa; border-bottom: 1px solid #b0b0b0; }
.hbar .thumb { width: 104px; background: #fafafa; border-right: 1px solid #b0b0b0; }
.splitter { height: 5px; display: flex; justify-content: center; align-items: center; }
.splitter i { width: 17px; height: 2px; background: radial-gradient(circle at 1px 1px, #c0c0c0 0.8px, transparent 1px) 0 0 / 3px 3px; }

.docktools.layers { position: relative; height: 29px; padding: 0 0 3px 4px; gap: 9px; }
.stylebtn { width: 24px; height: 24px; display: flex; align-items: center; justify-content: center; border: 1px solid #b4b4b4; border-radius: 2px; background: #f8f8f8; }
.stylebtn svg { width: 14px; height: 14px; }
.docktools .stylebtn + svg { margin-left: -4px; }
.docktools .drop { margin: 0 2px 0 -5px; }
.ring { position: absolute; left: -5px; top: -8px; fill: none; stroke: #e01b24; stroke-width: 2; }
.docktools > .ring { width: 44px; height: 44px; }
.pointer { position: absolute; left: 20px; top: 12px; }
.docktools > .pointer { width: 14px; height: 19px; }
.layerlist { flex: 1; padding-top: 1px; border: 1px solid #b0b0b0; background: #fff; }
.layerlist li { padding-left: 6px; }
.hl { background: #efefef; }
.bold { font-weight: bold; letter-spacing: -0.52px; }
.bold.caps { letter-spacing: -0.2px; }
.ul { text-decoration: underline; text-underline-offset: 2px; }
.chk { position: relative; width: 14px; height: 14px; border: 1px solid #a8a8a8; background: #fff; }
.chk::after { content: ""; position: absolute; inset: 1.500px 2px 1px 2.500px; background: #000; clip-path: polygon(0 50%, 25% 45%, 40% 70%, 78% 0, 100% 0, 50% 100%, 28% 100%); }
.layerlist .chk { margin: -1px 7px 0 0; }
.ras { width: 14px; height: 14px; margin: -1px 7px 0 0; --dk: #2a4668; --mid: #7f9dbf; }
.ras.lt { --dk: #3a74b5; --mid: #7aa8da; }
.layerlist li.leg { padding-left: 43px; }
.sw { width: 16px; height: 16px; margin-right: 6px; background: #000; }
.sw.w { background: #fff; }

.canvas { width: 686px; height: 549px; margin: 1px 0 0 6px; border: 1px solid #b0b0b0; background: #fff; }
.map { width: 684px; height: 547px; overflow: hidden; }
.holes { fill: #fff; }

.status { height: 28px; display: flex; align-items: center; font: 11px/16px "DejaVu Sans Condensed", "DejaVu Sans", sans-serif; letter-spacing: -0.2px; }
.status > * { flex: none; }
.status span { padding-top: 1px; }
.locate { width: 200px; height: 22px; margin-left: 4px; padding-left: 8px; display: flex; align-items: center; gap: 6px; border: 1px solid #a6a6a6; border-radius: 3px; background: #fff; color: #888; letter-spacing: -0.05px; }
.locate svg { width: 13px; height: 13px; fill: none; stroke: #999; stroke-width: 1.500; }
.t { overflow: hidden; }
.iden { width: 23px; margin-left: 7px; }
.coordl { width: 28px; margin-left: 7px; }
.field { height: 22px; display: flex; align-items: center; padding-left: 6px; border: 1px solid #a6a6a6; border-radius: 3px; background: #fff; }
.field span { flex: 1; }
.coord { width: 91px; margin-left: 3px; letter-spacing: -0.05px; padding-left: 5px; }
.mouse { width: 16px; height: 16px; margin-left: 4px; }
.scalel { width: 5px; margin-left: 13px; }
.scale { width: 81px; margin-left: 2px; padding-left: 4px; }
.scale b { width: 20px; height: 20px; padding-left: 3px; display: flex; align-items: center; border-left: 1px solid #b4b4b4; background: #f4f4f4; }
.lock { width: 12px; height: 16px; margin-left: 12px; }
.magl { width: 19px; margin-left: 9px; }
.mag { width: 88px; margin-left: 3px; padding-left: 4px; }
.spin { width: 14px; height: 20px; padding: 4px 0 0 3px; border-left: 1px solid #b4b4b4; background: #f4f4f4; }
.spin i { width: 7px; height: 4px; margin-bottom: 3px; background: #555; clip-path: polygon(50% 0, 100% 100%, 0 100%); }
.spin i + i { clip-path: polygon(0 0, 100% 0, 50% 100%); }
.rotl { width: 16px; margin-left: 9px; }
.rot { width: 84px; margin-left: 8px; padding-left: 4px; }
.status .chk { margin-left: 6px; }
.render { width: 37px; margin-left: 4px; letter-spacing: -0.1px; }
.crs { width: 15px; height: 14px; margin-left: 16px; }
.epsg { width: 56px; margin-left: 3px; }
.msg { width: 16px; height: 15px; margin-left: 17px; }
.sizegrip { width: 11px; height: 11px; margin: 12px 0 0 18px; background: radial-gradient(circle at 1px 1px, #aaa 0.8px, transparent 1px) 0 0 / 4px 4px; clip-path: polygon(100% 0, 100% 100%, 0 100%); }
```
FILE: map.js
```
// Cells of the raster whose value is 1, drawn as white pixels over the province.
// Each patch: centre x, centre y, half width, half height, slope in degrees, cell count.
const patches = [
  [581, 264, 8, 8, 0, 38], [599, 276, 16, 5, 52, 105], [607, 286, 4, 5, 0, 50], [619.5, 269, 2, 4, 0, 26],
  [633, 266, 10, 4, -10, 40], [656, 259, 15, 8, -8, 80], [672, 253, 8, 5, 0, 30], [654, 266, 2, 2, 0, 10],
  [623, 284, 5, 10, 0, 32], [609, 309, 8, 9, -30, 32], [612, 318, 6, 3, 0, 14],
  [588, 293, 2, 4, 0, 8], [676, 315, 9, 1, -48, 12],
  [700, 354, 8, 5, 15, 16], [711, 357, 5, 9, 0, 34], [600, 375, 9, 4, 0, 34],
  [796, 373, 3, 4, 0, 12], [845, 321, 1.5, 3, 0, 9], [614, 392, 2, 1.5, 0, 9],
  [391, 530, 6, 2.5, -35, 16], [500, 517, 2.5, 3, 0, 24], [500, 509, 1, 5, 0, 5],
  [531, 545, 4, 3, 0, 22], [549, 533, 3, 1.5, 0, 10], [550, 558, 9, 6, 0, 22],
  [555, 594, 9, 7, 0, 20], [548, 611, 1.6, 5, -25, 26], [550, 628, 9, 3, 0, 7],
  [561, 515, 9, 9, 0, 16], [535, 485, 13, 9, -25, 18], [545, 500, 12, 22, 0, 12],
  [640, 442, 3, 6, 0, 14], [650, 432, 7, 4, 0, 22], [645, 447, 6, 1, 0, 6],
  [714, 466, 5, 5, 0, 26], [727, 465, 5, 1.5, -10, 10], [708, 475, 3, 1.5, 0, 10],
  [714, 477, 3, 2, 0, 7], [704, 491, 2.5, 1, 0, 8], [721, 499, 3, 1, -50, 9],
  [634, 493, 4, 1, -15, 6], [646, 497, 6, 6, 0, 20], [677, 500, 3, 1, -50, 6],
  [701, 530, 6, 11, 0, 30], [699, 547, 6, 3, 0, 25], [633, 543, 15, 13, 0, 36],
  [633, 557, 2.5, 2, 0, 12], [662, 530, 10, 7, -40, 16], [679, 594, 4, 1, -25, 6],
  [564, 440, 8, 18, 0, 12], [590, 418, 5, 4, 0, 6], [615, 467, 3, 3, 0, 8]
];
const cells = [
  [618, 333], [620, 356], [737, 332], [703, 372], [737, 362], [675, 388], [774, 380], [809, 371],
  [478, 403], [454, 435], [473, 446], [479, 456], [489, 458], [515, 457], [467, 477], [445, 511],
  [418, 553], [425, 556], [410, 569], [434, 578], [445, 554], [446, 551], [501, 555], [468, 614],
  [553, 406], [552, 442], [575, 443], [580, 501], [581, 533], [586, 430], [599, 501], [606, 556],
  [607, 563], [614, 569], [588, 592], [526, 600], [533, 612], [522, 566], [537, 573], [617, 411],
  [659, 415], [740, 408], [755, 409], [706, 426], [710, 437], [695, 484], [749, 518], [751, 519],
  [723, 527], [725, 522], [807, 535], [732, 565], [735, 565], [730, 595], [627, 647], [610, 498],
  [641, 519], [629, 523], [667, 519], [695, 514], [415, 610], [533, 588]
];

let seed = 20180;
function next() {
  seed = (seed * 1103515245 + 12345) % 2147483648;
  return seed / 2147483648;
}
function cell(x, y) {
  return "M" + Math.round(x) + " " + Math.round(y) + "h1v1h-1z";
}

let d = cells.map(([x, y]) => cell(x, y)).join("");
for (const [cx, cy, rx, ry, slope, count] of patches) {
  const a = slope * Math.PI / 180;
  for (let i = 0; i < count; i++) {
    const r = Math.sqrt(next());
    const t = next() * 2 * Math.PI;
    const u = r * rx * Math.cos(t);
    const v = r * ry * Math.sin(t);
    d += cell(cx + u * Math.cos(a) - v * Math.sin(a), cy + u * Math.sin(a) + v * Math.cos(a));
  }
}
document.getElementById("settlements").setAttribute("d", d);
```
